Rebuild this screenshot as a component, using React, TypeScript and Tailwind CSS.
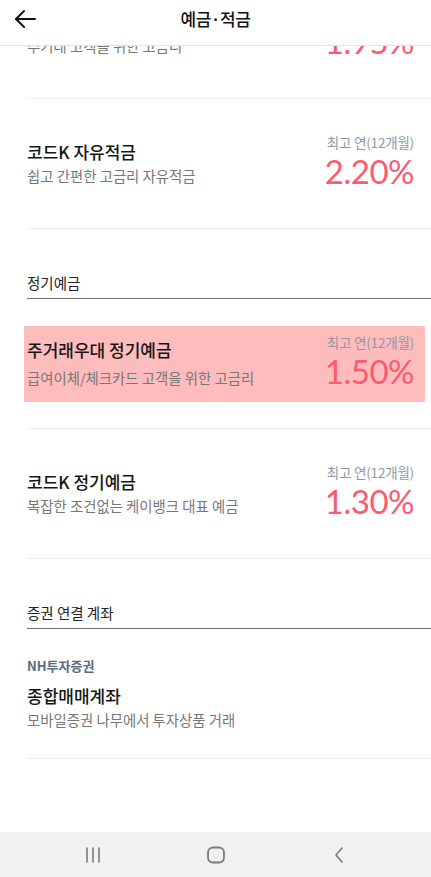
import React from "react";

const KR = { fontFamily: '"Noto Sans CJK KR", "Noto Sans", sans-serif' };

function Rate({ value }: { value: string }) {
  return (
    <div className="flex flex-col items-end -mt-[3px]">
      <div className="text-[13.5px] leading-[18px] text-[#8e97a8] tracking-[-0.2px]" style={KR}>최고 연(12개월)</div>
      <div className="text-[33px] leading-[40px] text-[#fb5a6f] tracking-[-0.5px]" style={{ fontFamily: 'Lato, "Noto Sans", sans-serif', fontWeight: 400 }}>
        {value}
      </div>
    </div>
  );
}

function Row({ title, sub, rate, highlight, first }: { title: string; sub: string; rate: string; highlight?: boolean; first?: boolean }) {
  return (
    <div className={`h-[129px] flex items-center ${first ? "-mt-[77px]" : ""}`}>
      <div className={`flex-1 flex items-center justify-between h-[76px] ml-[24px] mr-[6px] pl-[3px] pr-[11px] ${highlight ? "bg-[#ffbcbc]" : ""}`}>
        <div className={`flex flex-col ${highlight ? "gap-[7px]" : "gap-[3px]"}`} style={KR}>
          <div className="text-[17px] leading-[22px] font-medium text-[#151515]">{title}</div>
          <div className="text-[14.4px] leading-[20px] text-[#777777]">{sub}</div>
        </div>
        <Rate value={rate} />
      </div>
    </div>
  );
}

function Divider() {
  return <div className="ml-[27px] h-px bg-[#ededed]" />;
}

function Section({ title }: { title: string }) {
  return (
    <div className="h-[70px] flex flex-col justify-end ml-[27px]">
      <div className="text-[14.5px] leading-[20px] text-[#222] pb-[5px]" style={KR}>{title}</div>
      <div className="h-px bg-[#6f6f6f]" />
    </div>
  );
}

export default function App() {
  return (
    <div className="w-[431px] h-[877px] bg-white flex flex-col overflow-hidden">
      <div className="h-[46px] shrink-0 relative z-10 bg-white border-b border-[#e3e3e3] flex items-center justify-center">
        <svg className="absolute left-[13px] top-[8px]" width="24" height="22" viewBox="0 0 24 22" fill="none" stroke="#111" strokeWidth="2" strokeLinecap="round" strokeLinejoin="round">
          <path d="M22 11H3" />
          <path d="M11 3L3 11L11 19" />
        </svg>
        <div className="text-[17px] font-medium text-[#111] -mt-[7px] tracking-[-0.5px]" style={KR}>예금·적금</div>
      </div>
      <div className="flex-1 overflow-hidden flex flex-col">
        <Row first title="주거래우대 자유적금" sub="주거래 고객을 위한 고금리" rate="1.95%" />
        <Divider />
        <Row title="코드K 자유적금" sub="쉽고 간편한 고금리 자유적금" rate="2.20%" />
        <Divider />
        <Section title="정기예금" />
        <Row highlight title="주거래우대 정기예금" sub="급여이체/체크카드 고객을 위한 고금리" rate="1.50%" />
        <Divider />
        <Row title="코드K 정기예금" sub="복잡한 조건없는 케이뱅크 대표 예금" rate="1.30%" />
        <Divider />
        <Section title="증권 연결 계좌" />
        <div className="h-[129px] flex flex-col justify-center pl-[27px]" style={KR}>
          <div className="text-[13px] leading-[18px] font-bold text-[#5d6b80]">NH투자증권</div>
          <div className="mt-[10px] text-[17px] leading-[22px] font-medium text-[#151515]">종합매매계좌</div>
          <div className="mt-[3px] text-[14.4px] leading-[20px] text-[#777777]">모바일증권 나무에서 투자상품 거래</div>
        </div>
        <Divider />
      </div>
      <div className="h-[45px] shrink-0 bg-[#f1f1f1] flex items-center pl-[73px] gap-[83px]">
        <div className="w-[40px] flex justify-center">
          <svg width="20" height="18" viewBox="0 0 20 18" fill="none" stroke="#7a7a7a" strokeWidth="1.6" strokeLinecap="round">
            <path d="M4 2V16" />
            <path d="M10 2V16" />
            <path d="M16 2V16" />
          </svg>
        </div>
        <div className="w-[40px] flex justify-center">
          <svg width="20" height="20" viewBox="0 0 20 20" fill="none" stroke="#7a7a7a" strokeWidth="1.8">
            <rect x="2" y="2.5" width="16" height="15" rx="5" />
          </svg>
        </div>
        <div className="w-[40px] flex justify-center">
          <svg width="14" height="20" viewBox="0 0 14 20" fill="none" stroke="#7a7a7a" strokeWidth="1.6" strokeLinecap="round" strokeLinejoin="round">
            <path d="M10 3L4 10L10 17" />
          </svg>
        </div>
      </div>
    </div>
  );
}
